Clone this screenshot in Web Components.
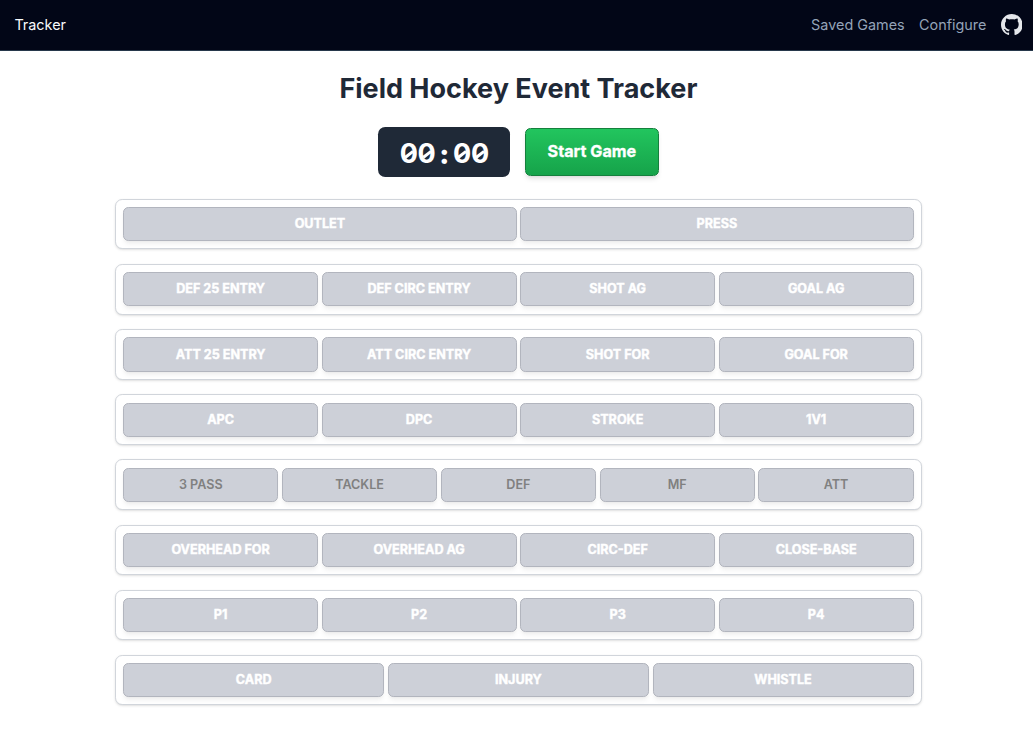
<!DOCTYPE html>
<html lang="en">
<head>
<meta charset="utf-8">
<title>Field Hockey Event Tracker</title>
<style>
html { overflow: hidden; background: #fff; }
body { margin: 0; width: 1036.8px; font-family: Inter, "Liberation Sans", sans-serif; font-size: 14.4px; line-height: 21.6px; }
</style>
</head>
<body>
<tracker-app></tracker-app>
<script>
const define = (name, html, setup) => customElements.define(name, class extends HTMLElement {
  connectedCallback() {
    if (this.shadowRoot) return;
    const t = document.createElement('template');
    t.innerHTML = html;
    this.attachShadow({ mode: 'open' }).append(t.content.cloneNode(true));
    if (setup) setup(this, this.shadowRoot);
  }
});

define('nav-bar', `
<style>
:host { display: flex; align-items: center; justify-content: space-between; box-sizing: border-box; height: 51px; padding: 0 14.4px; background: #020617; border-bottom: 1px solid #27384b; color: #94a3b8; }
nav { display: flex; align-items: center; gap: 14.4px; }
.brand { color: #f8fafc; }
svg { display: block; width: 21.6px; height: 21.6px; fill: #e5e7eb; }
</style>
<span class="brand">Tracker</span>
<nav><span>Saved Games</span><span>Configure</span>
<svg viewBox="0 0 16 16" aria-label="GitHub"><path d="M8 0C3.58 0 0 3.58 0 8c0 3.54 2.29 6.53 5.47 7.59.4.07.55-.17.55-.38 0-.19-.01-.82-.01-1.49-2.01.37-2.53-.49-2.69-.94-.09-.23-.48-.94-.82-1.13-.28-.15-.68-.52-.01-.53.63-.01 1.08.58 1.23.82.72 1.21 1.87.87 2.33.66.07-.52.28-.87.51-1.07-1.78-.2-3.64-.89-3.64-3.95 0-.87.31-1.59.82-2.15-.08-.2-.36-1.02.08-2.12 0 0 .67-.21 2.2.82.64-.18 1.32-.27 2-.27s1.36.09 2 .27c1.53-1.04 2.2-.82 2.2-.82.44 1.1.16 1.92.08 2.12.51.56.82 1.27.82 2.15 0 3.07-1.87 3.75-3.65 3.95.29.25.54.73.54 1.48 0 1.07-.01 1.93-.01 2.2 0 .21.15.46.55.38A8.01 8.01 0 0 0 16 8c0-4.42-3.58-8-8-8z"/></svg></nav>`);

define('game-clock', `
<style>
:host { display: flex; align-items: center; justify-content: center; box-sizing: border-box; width: 132px; height: 50px; border-radius: 7.2px; background: #1f2937; color: #fff; font-size: 27px; line-height: 32.4px; font-weight: 700; }
span { display: grid; grid-auto-flow: column; grid-auto-columns: 17.8px; justify-items: center; padding: 5px 0 0 1px; }
b { position: relative; font-weight: 700; }
.colon { font-weight: 900; top: 1px; }
.zero::after { content: ""; position: absolute; left: 50%; top: 50%; width: 10px; height: 2.6px; margin: -1.3px 0 0 -5px; background: #fff; transform: rotate(-38deg); }
</style><span></span>`, (el, root) => {
  for (const c of el.getAttribute('time')) {
    const b = document.createElement('b');
    b.textContent = c;
    if (c === '0') b.className = 'zero';
    if (c === ':') b.className = 'colon';
    root.querySelector('span').append(b);
  }
});

define('start-button', `
<style>
:host { display: block; }
button { display: block; box-sizing: border-box; width: 134px; height: 48px; padding: 0 0 1px; border: 1px solid #15803d; border-radius: 5.4px; background: linear-gradient(#22c55e, #16a34a); color: #fff; font: 700 16.2px/25px Inter, sans-serif; -webkit-text-stroke: .3px #fff; box-shadow: 0 3.6px 5.4px -1px rgba(0,0,0,.1), 0 1.8px 3.6px -2px rgba(0,0,0,.1); }
</style><button><slot></slot></button>`);

define('event-button', `
<style>
:host { display: block; min-width: 0; }
button { display: block; box-sizing: border-box; width: 100%; height: 34.2px; padding: 0; border: 1px solid #b2b5be; border-radius: 5.4px; background: #cdd0d8; color: #fff; font: 700 12.6px/18px Inter, sans-serif; -webkit-text-stroke: .4px #fff; box-shadow: 0 3.6px 5.4px -1px rgba(0,0,0,.06), 0 1.8px 3.6px -2px rgba(0,0,0,.06); }
:host([muted]) button { color: #808080; font-weight: 600; -webkit-text-stroke: 0; }
</style><button><slot></slot></button>`);

define('event-row', `
<style>
:host { display: grid; grid-auto-flow: column; grid-auto-columns: minmax(0, 1fr); gap: 3.6px; box-sizing: border-box; padding: 7.27px 7px 7.13px; border: 1px solid #d1d5db; border-radius: 7.2px; background: #fff; box-shadow: 0 1px 2.7px rgba(0,0,0,.1), 0 1px 1.8px -1px rgba(0,0,0,.1); }
</style><slot></slot>`);

define('tracker-app', `
<style>
:host { display: block; height: 737px; }
main { width: 806.4px; margin: 0 auto; padding-top: 22px; }
h1 { margin: 0; color: #1f2937; font-size: 27px; line-height: 32.4px; font-weight: 700; text-align: center; }
.controls { display: flex; align-items: center; justify-content: center; gap: 15px; height: 50px; margin: 21.6px 0 21.9px; }
.rows { display: grid; gap: 14.55px; }
</style>
<nav-bar></nav-bar>
<main>
<h1>Field Hockey Event Tracker</h1>
<div class="controls"><game-clock time="00:00"></game-clock><start-button>Start Game</start-button></div>
<div class="rows"></div>
</main>`, (el, root) => {
  const rows = [
    ['OUTLET', 'PRESS'],
    ['DEF 25 ENTRY', 'DEF CIRC ENTRY', 'SHOT AG', 'GOAL AG'],
    ['ATT 25 ENTRY', 'ATT CIRC ENTRY', 'SHOT FOR', 'GOAL FOR'],
    ['APC', 'DPC', 'STROKE', '1V1'],
    ['3 PASS', 'TACKLE', 'DEF', 'MF', 'ATT'],
    ['OVERHEAD FOR', 'OVERHEAD AG', 'CIRC-DEF', 'CLOSE-BASE'],
    ['P1', 'P2', 'P3', 'P4'],
    ['CARD', 'INJURY', 'WHISTLE']
  ];
  rows.forEach((labels, i) => {
    const row = document.createElement('event-row');
    for (const label of labels) {
      const b = document.createElement('event-button');
      b.textContent = label;
      if (i === 4) b.setAttribute('muted', '');
      row.append(b);
    }
    root.querySelector('.rows').append(row);
  });
});
</script>
</body>
</html>
